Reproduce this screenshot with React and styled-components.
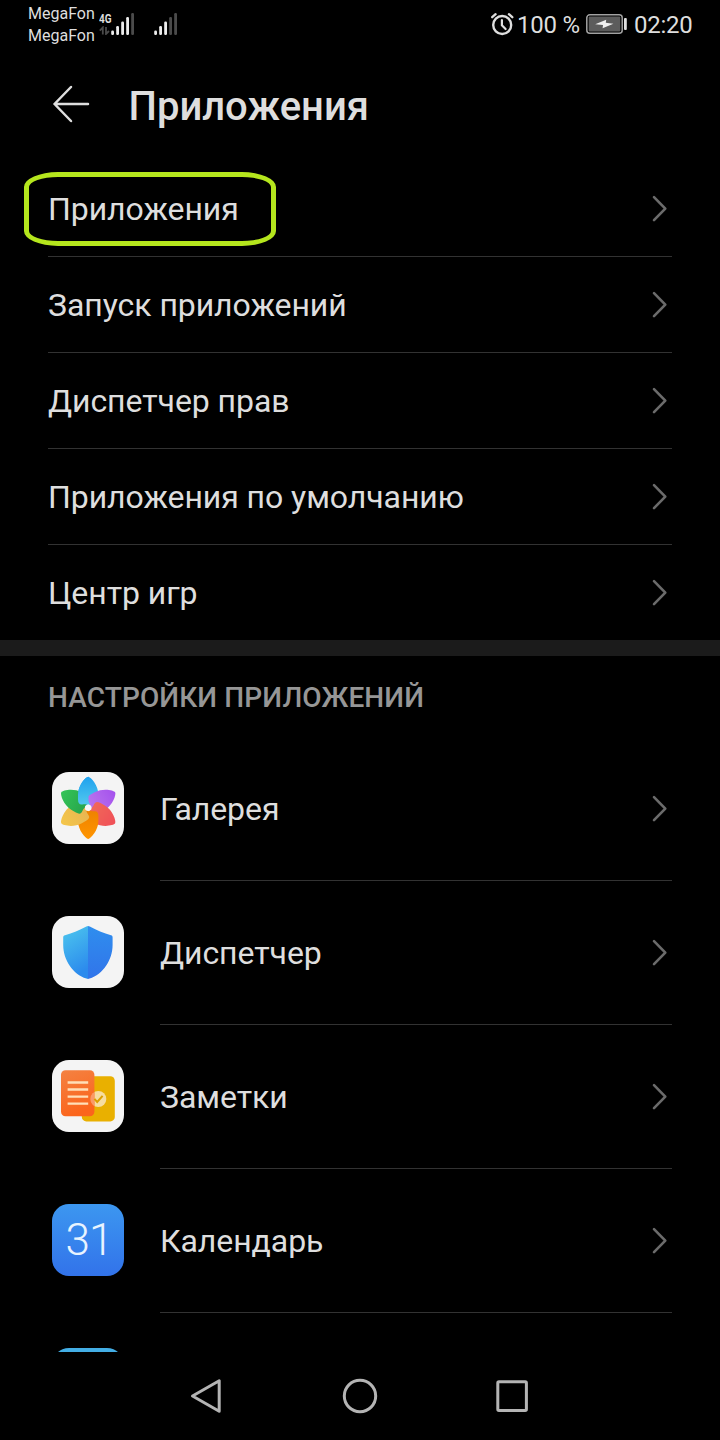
import React from 'react';
import styled, { createGlobalStyle } from 'styled-components';

const GlobalStyle = createGlobalStyle`
  * {
    box-sizing: border-box;
  }
  body {
    margin: 0;
    background: #000;
    color: #dedede;
    font-family: Roboto, 'Noto Sans', sans-serif;
  }
  svg {
    display: block;
    flex-shrink: 0;
  }
`;

const Screen = styled.div`
  display: flex;
  flex-direction: column;
  width: 720px;
  height: 1440px;
  overflow: hidden;
  background: #000;
`;

const StatusBar = styled.div`
  display: flex;
  justify-content: space-between;
  flex-shrink: 0;
  height: 48px;
  padding: 0 28px;
`;

const StatusGroup = styled.div`
  display: flex;
  align-items: center;
`;

const SignalGroup = styled(StatusGroup)`
  gap: 19px;
  height: 48px;
`;

const Carriers = styled.div`
  width: 70.5px;
  padding-top: 1px;
  font-size: 16px;
  line-height: 22px;
`;

const Network = styled.div`
  display: flex;
  flex-direction: column;
  width: 12.5px;
  margin-top: -2px;
`;

const NetworkType = styled.div`
  height: 15px;
  font-size: 13.5px;
  font-weight: 700;
  line-height: 14px;
  transform: scaleX(0.74);
  transform-origin: left;
`;

const StatusText = styled.div`
  width: ${props => props.width}px;
  margin-top: 2px;
  font-size: 24px;
  line-height: 48px;
  letter-spacing: -0.25px;
  white-space: nowrap;
`;

const Header = styled.div`
  display: flex;
  align-items: center;
  flex-shrink: 0;
  height: 112px;
  padding-left: 52px;
`;

const Title = styled.h1`
  margin: 5px 0 0 38.5px;
  font-size: 40px;
  font-weight: 500;
  line-height: 56px;
`;

const Content = styled.div`
  flex: 1;
  min-height: 0;
  overflow: hidden;
`;

const Row = styled.div`
  position: relative;
  display: flex;
  align-items: center;
  height: ${props => (props.large ? 144 : 96)}px;
  padding: 0 48px;
`;

const RowBody = styled.div`
  display: flex;
  flex: 1;
  align-items: center;
  justify-content: space-between;
  height: 100%;
  padding: 0 3px 1px 0;
  border-top: 1px solid ${props => (props.divider ? '#323232' : 'transparent')};
`;

const Label = styled.span`
  margin-top: 2px;
  font-size: 32px;
  line-height: 40px;
  letter-spacing: -0.06px;
`;

const Highlight = styled.div`
  position: absolute;
  left: 24px;
  top: 12px;
  width: 252px;
  height: 74px;
  border: 5px solid #b5e61d;
  border-radius: 34px / 15px;
`;

const SectionGap = styled.div`
  height: 16px;
  background: #1b1b1b;
`;

const SectionTitle = styled.h2`
  margin: 0;
  height: 80px;
  padding: 2px 48px 0;
  color: #969696;
  font-size: 28px;
  font-weight: 500;
  line-height: 80px;
  letter-spacing: 0.12px;
`;

const AppIcon = styled.div`
  display: flex;
  align-items: center;
  justify-content: center;
  flex-shrink: 0;
  width: 72px;
  height: 72px;
  margin: 0 36px 0 4px;
  border-radius: 17px;
  overflow: hidden;
  background: ${props => props.fill || '#f4f4f4'};
`;

const DayNumber = styled.span`
  padding-left: 2px;
  color: #e8f4ff;
  font-size: 44px;
  font-weight: 300;
  line-height: 72px;
  letter-spacing: -1px;
`;

const NavBar = styled.div`
  display: flex;
  align-items: center;
  justify-content: space-between;
  flex-shrink: 0;
  height: 88px;
  padding: 0 188px;
`;

const Chevron = () => (
  <svg width="18" height="28" viewBox="0 0 18 28" fill="none">
    <path
      d="M3 3.1 L14.3 14.6 L3 26.1"
      stroke="#6b6b6b"
      strokeWidth="2.6"
      strokeLinecap="round"
      strokeLinejoin="round"
    />
  </svg>
);

const BackArrow = () => (
  <svg width="38" height="40" viewBox="0 0 38 40" fill="none">
    <path
      d="M19 3 L2.5 20 L19 37 M2.5 20 H36"
      stroke="#dedede"
      strokeWidth="2.5"
      strokeLinecap="round"
      strokeLinejoin="round"
    />
  </svg>
);

const DataArrows = () => (
  <svg width="12" height="9" viewBox="0 0 12 9" fill="none">
    <path
      d="M3.8 8.5 V1.5 L0.8 4.6 M7 1 V8 L10 5"
      stroke="#4a4a4a"
      strokeWidth="1.8"
    />
  </svg>
);

const Signal = ({ level }) => (
  <svg width="24" height="24" viewBox="0 0 24 24">
    {[4.5, 9, 13.5, 18, 22].map((h, i) => (
      <rect
        key={h}
        x={0.2 + i * 5}
        y={23 - h}
        width="2.8"
        height={h}
        rx="1.2"
        fill={i < level ? '#ececec' : '#4b4b4b'}
      />
    ))}
  </svg>
);

const AlarmIcon = () => (
  <svg width="26" height="24" viewBox="0 0 26 24" fill="none" stroke="#dedede">
    <circle cx="11.2" cy="13" r="9" strokeWidth="2.4" />
    <path d="M10.9 8 V13.4 L14.6 17" strokeWidth="2.2" strokeLinecap="round" />
    <path
      d="M1.2 5.2 L4.6 2.2 M21.3 5.2 L17.9 2.2"
      strokeWidth="2.3"
      strokeLinecap="round"
    />
  </svg>
);

const BatteryIcon = () => (
  <svg width="48" height="22" viewBox="0 0 48 22" fill="none">
    <rect x="0.8" y="1.8" width="35.4" height="18.4" rx="3" stroke="#a2a2a2" strokeWidth="1.5" />
    <rect x="2.7" y="3.6" width="31.6" height="14.8" rx="0.8" fill="#5c5c5c" />
    <rect x="38" y="5" width="2.8" height="12" rx="1" fill="#dedede" />
    <path d="M9.2 11.2 L20.2 6.8 L19.8 9.8 L27.4 10.7 L16.6 15.2 L17 12 Z" fill="#f0f0f0" />
  </svg>
);

const PETAL =
  'M36.2 4.7 C33.6 4.7 26 13.4 26 22.5 V27.5 C26 31.5 27.5 32.8 30.5 32.4 C33.5 32 35 33 37 33 C43 33 46.4 30 46.4 22.5 C46.4 13.4 38.8 4.7 36.2 4.7 Z';

const petals = [
  ['blue', '#1fa1ee', '#52c9ee'],
  ['purple', '#a552ed', '#b873ed'],
  ['red', '#f05058', '#f06858'],
  ['orange', '#ff9500', '#ee8200'],
  ['yellow', '#f4c64a', '#e9b652'],
  ['green', '#33c458', '#28a64c'],
];

const GalleryIcon = () => (
  <svg width="72" height="72" viewBox="0 0 72 72">
    <defs>
      {petals.map(([id, from, to]) => (
        <linearGradient key={id} id={id} x1="0" y1="0" x2="0" y2="1">
          <stop offset="0" stopColor={from} />
          <stop offset="1" stopColor={to} />
        </linearGradient>
      ))}
      <clipPath id="leftHalf">
        <rect width="36.5" height="72" />
      </clipPath>
    </defs>
    {petals.map(([id], i) => (
      <path
        key={id}
        d={PETAL}
        fill={`url(#${id})`}
        transform={`rotate(${i * 60} 36.2 35.8)`}
      />
    ))}
    {/* the first petal also has to lie over the last one */}
    <path d={PETAL} fill="url(#blue)" clipPath="url(#leftHalf)" />
    <path d="M36.2 32.3 L39.3 34 V37.6 L36.2 39.3 L33.1 37.6 V34 Z" fill="#f8f8f8" />
  </svg>
);

const ShieldIcon = () => (
  <svg width="72" height="72" viewBox="0 0 72 72">
    <defs>
      <linearGradient id="shieldLeft" x1="0" y1="0" x2="0.3" y2="1">
        <stop offset="0" stopColor="#4dc8ee" />
        <stop offset="1" stopColor="#2c8bed" />
      </linearGradient>
      <linearGradient id="shieldRight" x1="0" y1="0" x2="0" y2="1">
        <stop offset="0" stopColor="#2f8eee" />
        <stop offset="1" stopColor="#3174ea" />
      </linearGradient>
    </defs>
    <path
      d="M36 10 C35.4 10 35 10.3 34.4 10.6 C28 14.3 20 17.2 13 19.2 C11.7 19.6 11.2 20.2 11.2 21.5 V29 C11.2 44 21 58.4 34.4 62.6 Q35.3 63 36 63 Z"
      fill="url(#shieldLeft)"
    />
    <path
      d="M36 10 C36.7 10 37.2 10.3 37.8 10.6 C44 14.3 52 17.2 59 19.2 C60.3 19.6 60.6 20.2 60.6 21.5 V29 C60.6 44 51 58.4 37.6 62.6 Q36.7 63 36 63 Z"
      fill="url(#shieldRight)"
    />
  </svg>
);

const NotesIcon = () => (
  <svg width="72" height="72" viewBox="0 0 72 72" fill="none">
    <defs>
      <linearGradient id="sheet" x1="0" y1="0" x2="0.3" y2="1">
        <stop offset="0" stopColor="#f48242" />
        <stop offset="1" stopColor="#fb651c" />
      </linearGradient>
      <clipPath id="sheetClip">
        <rect x="9" y="10.3" width="33.4" height="46" rx="4.5" />
      </clipPath>
    </defs>
    <rect x="29.8" y="16.2" width="33" height="45.2" rx="4.5" fill="#e9b000" />
    <circle cx="46.3" cy="39" r="8" fill="#f6dda0" />
    <rect x="9" y="10.3" width="33.4" height="46" rx="4.5" fill="url(#sheet)" />
    <circle cx="46.3" cy="39" r="8" fill="#f99a68" clipPath="url(#sheetClip)" />
    <path
      d="M15.6 22.5 H36.2 M15.6 29.5 H36.2 M15.6 36.6 H36.2 M15.6 43.7 H36.2"
      stroke="#ffdfb8"
      strokeWidth="2.3"
    />
    <path d="M42.4 38.8 L45.2 42 L50.6 35.8" stroke="#dca000" strokeWidth="2" />
  </svg>
);

const menuItems = [
  'Приложения',
  'Запуск приложений',
  'Диспетчер прав',
  'Приложения по умолчанию',
  'Центр игр',
];

const appItems = [
  { name: 'Галерея', icon: <GalleryIcon /> },
  { name: 'Диспетчер', icon: <ShieldIcon /> },
  { name: 'Заметки', icon: <NotesIcon /> },
  {
    name: 'Календарь',
    icon: <DayNumber>31</DayNumber>,
    fill: 'linear-gradient(#3c97f0, #3273ea)',
  },
  { name: '', icon: null, fill: '#43aee5' },
];

const App = () => (
  <>
    <GlobalStyle />
    <Screen>
      <StatusBar>
        <StatusGroup>
          <Carriers>
            <div>MegaFon</div>
            <div>MegaFon</div>
          </Carriers>
          <Network>
            <NetworkType>4G</NetworkType>
            <DataArrows />
          </Network>
          <SignalGroup>
            <Signal level={4} />
            <Signal level={3} />
          </SignalGroup>
        </StatusGroup>
        <StatusGroup>
          <AlarmIcon />
          <StatusText width={69}>100 %</StatusText>
          <BatteryIcon />
          <StatusText width={58}>02:20</StatusText>
        </StatusGroup>
      </StatusBar>
      <Header>
        <BackArrow />
        <Title>Приложения</Title>
      </Header>
      <Content>
        {menuItems.map((name, i) => (
          <Row key={name}>
            <RowBody divider={i > 0 ? 1 : 0}>
              <Label>{name}</Label>
              <Chevron />
            </RowBody>
            {i === 0 && <Highlight />}
          </Row>
        ))}
        <SectionGap />
        <SectionTitle>НАСТРОЙКИ ПРИЛОЖЕНИЙ</SectionTitle>
        {appItems.map((app, i) => (
          <Row key={app.name} large={1}>
            <AppIcon fill={app.fill}>{app.icon}</AppIcon>
            <RowBody divider={i > 0 ? 1 : 0}>
              <Label>{app.name}</Label>
              <Chevron />
            </RowBody>
          </Row>
        ))}
      </Content>
      <NavBar>
        <svg width="36" height="40" viewBox="0 0 36 40" fill="none">
          <path
            d="M4.5 20 L31.2 4.8 V35.2 Z"
            stroke="#b4b4b4"
            strokeWidth="3"
            strokeLinejoin="round"
          />
        </svg>
        <svg width="36" height="40" viewBox="0 0 36 40" fill="none">
          <circle cx="18" cy="20" r="15.7" stroke="#b4b4b4" strokeWidth="3" />
        </svg>
        <svg width="36" height="40" viewBox="0 0 36 40" fill="none">
          <rect x="1.8" y="5.8" width="28.6" height="28.6" rx="1.2" stroke="#b4b4b4" strokeWidth="3" />
        </svg>
      </NavBar>
    </Screen>
  </>
);

export default App;
